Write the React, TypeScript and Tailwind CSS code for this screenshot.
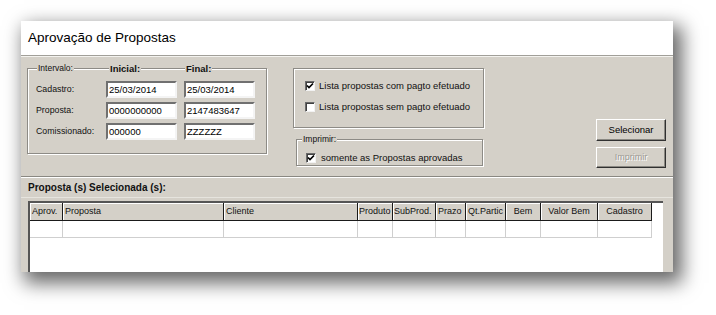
import React from "react";

const font = { fontFamily: '"Liberation Sans", Arial, sans-serif' };

function Check({ checked }: { checked?: boolean }) {
  return (
    <span className="w-[10px] h-[10px] shrink-0 bg-white border border-t-[#6a6a6a] border-l-[#6a6a6a] border-b-[#f2f2f2] border-r-[#f2f2f2] shadow-[inset_1px_1px_0_#404040] flex items-center justify-center">
      {checked && (
        <svg width="8" height="8" viewBox="0 0 8 8">
          <path d="M1 3.5 L3 5.5 L7 1.5" stroke="#000" strokeWidth="1.7" fill="none" />
        </svg>
      )}
    </span>
  );
}

function Field({ value }: { value: string }) {
  return (
    <div className="h-[17px] bg-white border-2 border-t-[#707070] border-l-[#707070] border-b-[#f4f4f4] border-r-[#f4f4f4] flex items-center pl-[1px] text-[9.5px] text-black leading-none">
      {value}
    </div>
  );
}

const cols = [
  { label: "Aprov.", w: "w-[33px]", align: "justify-start pl-[2px]" },
  { label: "Proposta", w: "w-[161px]", align: "justify-start pl-[2px]" },
  { label: "Cliente", w: "w-[134px]", align: "justify-start pl-[2px]" },
  { label: "Produto", w: "w-[35px]", align: "justify-start pl-[1px]" },
  { label: "SubProd.", w: "w-[43px]", align: "justify-start pl-[1px]" },
  { label: "Prazo", w: "w-[30px]", align: "justify-start pl-[2px]" },
  { label: "Qt.Partic", w: "w-[40px]", align: "justify-start pl-[2px]" },
  { label: "Bem", w: "w-[35px]", align: "justify-center" },
  { label: "Valor Bem", w: "w-[57px]", align: "justify-center" },
  { label: "Cadastro", w: "w-[54px]", align: "justify-center" },
];

export default function App() {
  return (
    <div className="w-[716px] min-h-[315px] bg-white pl-[21px] pt-[21px]" style={font}>
      <div className="w-[652px] h-[251px] bg-[#d4d0c8] flex flex-col overflow-hidden shadow-[6px_8px_18px_3px_rgba(0,0,0,0.6)]">
        {/* title bar */}
        <div className="h-[35px] bg-white flex items-center pl-[7px] text-[13.5px] text-black border-b border-[#a19f99]">
          Aprovação de Propostas
        </div>
        <div className="border-t border-[#f4f3ef]" />

        {/* filters */}
        <div className="h-[119px] flex pl-[6px] pt-[11px]">
          <div className="relative w-[240px] h-[86px] border border-[#8d8b86] shadow-[inset_1px_1px_0_#fff,1px_1px_0_#fff] text-[#111]">
            <span className="absolute -top-[5px] left-[9px] px-[1px] bg-[#d4d0c8] text-[8.5px] leading-none">Intervalo:</span>
            <span className="absolute -top-[5px] left-[81px] px-[1px] bg-[#d4d0c8] text-[9.5px] font-bold leading-none">Inicial:</span>
            <span className="absolute -top-[5px] left-[157px] px-[1px] bg-[#d4d0c8] text-[9.5px] font-bold leading-none">Final:</span>
            <div className="flex flex-col gap-[4px] pt-[12px]">
              {[
                ["Cadastro:", "25/03/2014", "25/03/2014"],
                ["Proposta:", "0000000000", "2147483647"],
                ["Comissionado:", "000000", "ZZZZZZ"],
              ].map(([l, a, b]) => (
                <div key={l} className="flex items-center">
                  <span className="w-[78px] pl-[8px] text-[8.8px]">{l}</span>
                  <div className="w-[71px]">
                    <Field value={a} />
                  </div>
                  <div className="w-[71px] ml-[7px]">
                    <Field value={b} />
                  </div>
                </div>
              ))}
            </div>
          </div>

          <div className="ml-[26px] flex flex-col">
            <div className="w-[191px] h-[60px] border border-[#8d8b86] shadow-[inset_1px_1px_0_#fff,1px_1px_0_#fff] flex flex-col pl-[11px] pt-[12px] gap-[11px] text-[9.5px] text-[#111]">
              <label className="flex items-center gap-[4px] h-[10px]">
                <Check checked />
                <span>Lista propostas com pagto efetuado</span>
              </label>
              <label className="flex items-center gap-[4px] h-[10px]">
                <Check />
                <span>Lista propostas sem pagto efetuado</span>
              </label>
            </div>
            <div className="relative ml-[3px] mt-[11px] w-[187px] h-[27px] border border-[#8d8b86] shadow-[inset_1px_1px_0_#fff,1px_1px_0_#fff] text-[#111]">
              <span className="absolute -top-[5px] left-[5px] px-[1px] bg-[#d4d0c8] text-[8.5px] leading-none">Imprimir:</span>
              <label className="flex items-center gap-[5px] pl-[9px] pt-[11px] text-[9.5px]">
                <Check checked />
                <span>somente as Propostas aprovadas</span>
              </label>
            </div>
          </div>

          <div className="ml-[112px] pt-[51px] flex flex-col gap-[6px]">
            <button className="w-[70px] h-[22px] bg-[#d4d0c8] border border-t-white border-l-white border-r-[#303030] border-b-[#303030] shadow-[inset_-1px_-1px_0_#8a8882] text-[9.5px] text-black">
              Selecionar
            </button>
            <button
              disabled
              className="w-[70px] h-[21px] bg-[#d4d0c8] border border-t-white border-l-white border-r-[#303030] border-b-[#303030] shadow-[inset_-1px_-1px_0_#8a8882] text-[9px] text-[#9c9a94] [text-shadow:1px_1px_0_#fff]"
            >
              Imprimir
            </button>
          </div>
        </div>

        {/* selected proposals */}
        <div className="border-t border-[#8a8882]" />
        <div className="h-[21px] flex items-center pl-[7px] text-[10px] font-bold text-[#111] border-t border-white border-b border-b-[#e6e4de]">
          Proposta (s) Selecionada (s):
        </div>
        <div className="flex-1 ml-[7px] mt-[3px] w-[635px] bg-white border-t-2 border-l-2 border-[#555]">
          <div className="flex">
            {cols.map((c) => (
              <div
                key={c.label}
                className={`${c.w} h-[18px] flex items-center ${c.align} bg-[#d4d0c8] border-r border-b border-[#1a1a1a] shadow-[inset_1px_1px_0_#fff] text-[9px] text-[#111] whitespace-nowrap overflow-hidden`}
              >
                {c.label}
              </div>
            ))}
          </div>
          <div className="flex">
            {cols.map((c) => (
              <div key={c.label} className={`${c.w} h-[17px] border-r border-b border-[#cfcfcf]`} />
            ))}
          </div>
        </div>
      </div>
    </div>
  );
}
